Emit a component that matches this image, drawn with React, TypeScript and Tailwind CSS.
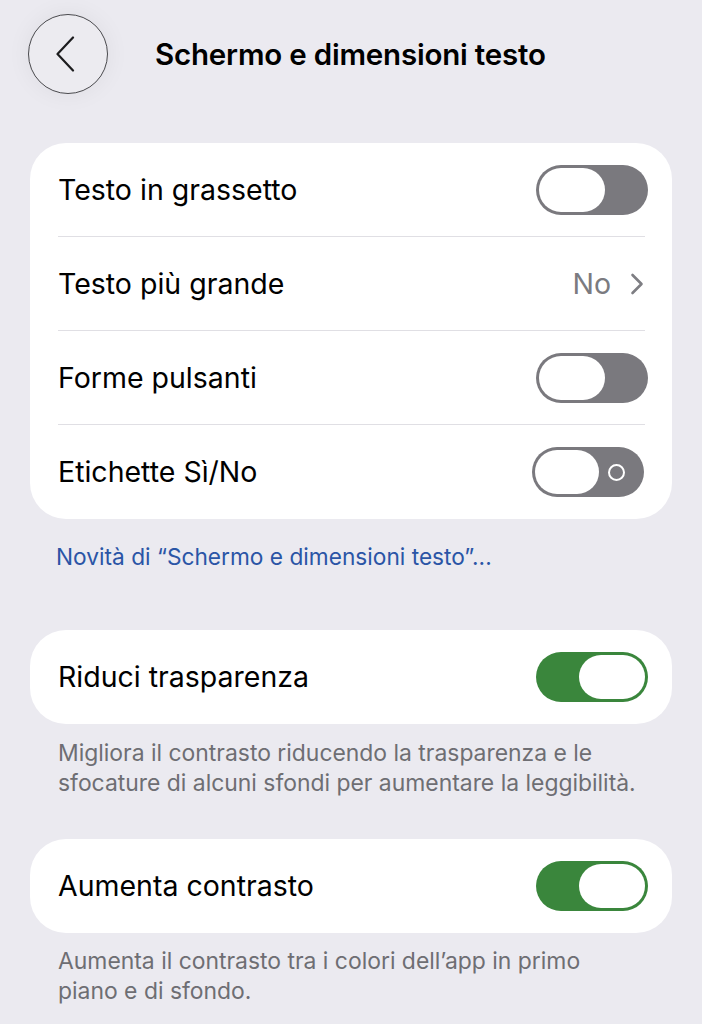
type ToggleProps = { on?: boolean; labels?: boolean };

function Toggle({ on = false, labels = false }: ToggleProps) {
  if (on) {
    return (
      <div className="flex h-[50px] w-[112px] shrink-0 items-center justify-end rounded-full bg-[#3a863c] p-[3px]">
        <div className="h-[44px] w-[66px] rounded-full bg-white" />
      </div>
    );
  }
  return (
    <div className="flex h-[50px] w-[112px] shrink-0 items-center rounded-full bg-[#7a797e] p-[3px]">
      <div className={labels ? "h-[44px] w-[64px] rounded-full bg-white" : "h-[44px] w-[66px] rounded-full bg-white"} />
      {labels && (
        <div className="ml-[9px] h-[17px] w-[17px] rounded-full border-2 border-white" />
      )}
    </div>
  );
}

function Row({ label, children, divider }: { label: string; children: React.ReactNode; divider?: boolean }) {
  return (
    <div className="relative flex h-[94px] items-center justify-between pl-[28px] pr-[24px]">
      <span className="text-[28.5px] text-black">{label}</span>
      {children}
      {divider && <div className="absolute bottom-0 left-[28px] right-[27px] h-px bg-[#e0dfe4]" />}
    </div>
  );
}

export default function App() {
  return (
    <div
      className="min-h-[1024px] w-full bg-[#ebeaf0] px-[30px]"
      style={{ fontFamily: "Inter, 'Noto Sans', sans-serif" }}
    >
      {/* Barra di navigazione */}
      <div className="flex items-center pt-[14px]">
        <button className="-ml-[2px] flex h-[80px] w-[80px] items-center justify-center rounded-full border border-[#4a4a4e] bg-[#ecebf0] shadow-[0_0_24px_rgba(0,0,0,0.06)]">
          <svg width="20" height="36" viewBox="0 0 20 36" className="-ml-[6px]" fill="none">
            <path d="M18 1.5 L2.5 18 L18 34.5" stroke="#1c1c1e" strokeWidth="2.2" strokeLinecap="round" strokeLinejoin="round" />
          </svg>
        </button>
        <h1 className="ml-[47px] text-[29.5px] font-semibold tracking-[-0.2px] text-black">
          Schermo e dimensioni testo
        </h1>
      </div>

      <div className="mt-[49px] overflow-hidden rounded-[36px] bg-white">
        <Row label="Testo in grassetto" divider>
          <Toggle />
        </Row>
        <Row label="Testo più grande" divider>
          <div className="flex items-center gap-[19px] pr-[4px] text-[#7b7b80]">
            <span className="text-[28.5px]">No</span>
            <svg width="14" height="22" viewBox="0 0 14 22" fill="none">
              <path d="M2.5 2 L11.5 11 L2.5 20" stroke="#7e7e83" strokeWidth="2.6" strokeLinecap="round" strokeLinejoin="round" />
            </svg>
          </div>
        </Row>
        <Row label="Forme pulsanti" divider>
          <Toggle />
        </Row>
        <Row label="Etichette Sì/No">
          <div className="-translate-x-[4px]">
            <Toggle labels />
          </div>
        </Row>
      </div>

      <p className="mt-[23px] pl-[26px] text-[22.7px] leading-[30px] text-[#2a55a6]">
        Novità di “Schermo e dimensioni testo”...
      </p>

      <div className="mt-[58px] overflow-hidden rounded-[36px] bg-white">
        <Row label="Riduci trasparenza">
          <Toggle on />
        </Row>
      </div>
      <p className="mt-[14px] pl-[28px] pr-[36px] text-[22.9px] leading-[30px] text-[#6e6e73]">
        Migliora il contrasto riducendo la trasparenza e le sfocature di alcuni sfondi per aumentare la leggibilità.
      </p>

      <div className="mt-[41px] overflow-hidden rounded-[36px] bg-white">
        <Row label="Aumenta contrasto">
          <Toggle on />
        </Row>
      </div>
      <p className="mt-[13px] pl-[28px] pr-[36px] text-[22.9px] leading-[30px] text-[#6e6e73]">
        Aumenta il contrasto tra i colori dell’app in primo piano e di sfondo.
      </p>
    </div>
  );
}
